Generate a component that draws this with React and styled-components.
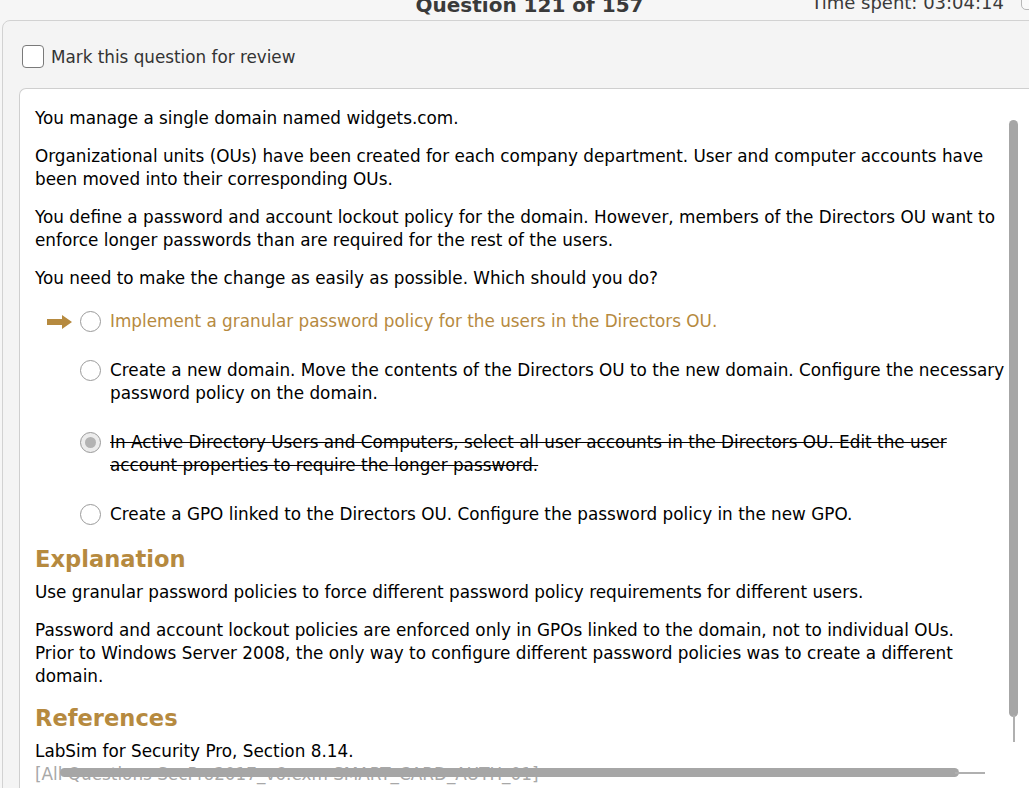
import React from "react";
import styled, { createGlobalStyle } from "styled-components";

const GlobalStyle = createGlobalStyle`
  html, body {
    margin: 0;
    padding: 0;
    height: 788px;
    overflow: hidden;
    background: #f6f6f6;
    font-family: "DejaVu Sans", Verdana, sans-serif;
  }
`;

const GOLD = "#b68a3f";

const options = [
  { text: "Implement a granular password policy for the users in the Directors OU.", correct: true },
  {
    text: "Create a new domain. Move the contents of the Directors OU to the new domain. Configure the necessary password policy on the domain.",
  },
  {
    text: "In Active Directory Users and Computers, select all user accounts in the Directors OU. Edit the user account properties to require the longer password.",
    chosen: true,
  },
  { text: "Create a GPO linked to the Directors OU. Configure the password policy in the new GPO." },
];

const Arrow = () => (
  <svg width="25" height="14" viewBox="0 0 25 14">
    <path d="M0 4 H15 V0 L25 7 L15 14 V10 H0 Z" fill={GOLD} />
  </svg>
);

const App = () => {
  return (
    <Page>
      <GlobalStyle />
      <Header>
        <span />
        <Title>Question 121 of 157</Title>
        <TimeBox>
          <Time>Time spent: 03:04:14</Time>
          <PauseButton />
        </TimeBox>
      </Header>
      <Panel>
        <ReviewRow>
          <CheckBox />
          <ReviewLabel>Mark this question for review</ReviewLabel>
        </ReviewRow>
        <Sheet>
          <Content>
            <Para>You manage a single domain named widgets.com.</Para>
            <Para>
              Organizational units (OUs) have been created for each company department. User and computer accounts have
              been moved into their corresponding OUs.
            </Para>
            <Para>
              You define a password and account lockout policy for the domain. However, members of the Directors OU want
              to enforce longer passwords than are required for the rest of the users.
            </Para>
            <Para>You need to make the change as easily as possible. Which should you do?</Para>
            <Options>
              {options.map((o, i) => (
                <Option key={i}>
                  <ArrowSlot>{o.correct && <Arrow />}</ArrowSlot>
                  <Radio $checked={o.chosen} />
                  <OptionText $correct={o.correct} $struck={o.chosen}>
                    {o.text}
                  </OptionText>
                </Option>
              ))}
            </Options>
            <Section>
              <Heading>Explanation</Heading>
              <Para>Use granular password policies to force different password policy requirements for different users.</Para>
              <Para>
                Password and account lockout policies are enforced only in GPOs linked to the domain, not to individual OUs.
                Prior to Windows Server 2008, the only way to configure different password policies was to create a
                different domain.
              </Para>
              <Heading $top={15}>References</Heading>
              <RefLine>LabSim for Security Pro, Section 8.14.</RefLine>
              <SourceLine>[All Questions SecPro2017_v6.exm SMART_CARD_AUTH_01]</SourceLine>
            </Section>
          </Content>
          <VThumb />
          <VTrack />
          <HThumb />
          <HTrack />
        </Sheet>
      </Panel>
    </Page>
  );
};

const Page = styled.div`
  width: 1029px;
  height: 788px;
  overflow: hidden;
`;

const Header = styled.div`
  display: grid;
  grid-template-columns: 1fr auto 1fr;
  align-items: end;
  height: 20px;
  padding-left: 30px;
`;

const Title = styled.div`
  font-weight: bold;
  font-size: 20px;
  line-height: 20px;
  color: #3a3a3a;
  margin-top: -9px;
  transform: translateY(-5px);
`;

const TimeBox = styled.div`
  display: flex;
  justify-content: flex-end;
  align-items: flex-start;
  align-self: start;
  gap: 17px;
`;

const Time = styled.div`
  font-size: 18px;
  line-height: 18px;
  color: #3a3a3a;
  margin-top: -6px;
`;

const PauseButton = styled.div`
  width: 30px;
  height: 10px;
  margin-top: -2px;
  margin-right: -24px;
  border: 1px solid #b8b8b8;
  border-radius: 0 0 0 5px;
  background: #fafafa;
`;

const Panel = styled.div`
  margin-left: 2px;
  width: 1060px;
  height: 800px;
  border: 1px solid #d2d2d2;
  border-radius: 8px;
  background: #f4f4f4;
  padding: 24px 0 0 16px;
  box-sizing: border-box;
`;

const ReviewRow = styled.div`
  display: flex;
  align-items: center;
  gap: 7px;
  margin-left: 3px;
  height: 23px;
`;

const CheckBox = styled.div`
  width: 20px;
  height: 21px;
  border: 1px solid #7a7a7a;
  border-radius: 4px;
  background: #fff;
`;

const ReviewLabel = styled.span`
  font-size: 16.8px;
  color: #333;
`;

const Sheet = styled.div`
  position: relative;
  margin-top: 20px;
  height: 720px;
  border: 1px solid #cfcfcf;
  border-right: none;
  border-radius: 7px 0 0 0;
  background: #fff;
  padding: 18px 0 0 15px;
  box-sizing: border-box;
  overflow: hidden;
`;

const Content = styled.div`
  width: 976px;
  font-size: 16.83px;
  line-height: 23px;
  color: #000;
`;

const Section = styled.div`
  width: 945px;
`;

const Para = styled.p`
  margin: 0 0 15px 0;
`;

const Options = styled.div`
  display: flex;
  flex-direction: column;
  gap: 26px;
  margin: 20px 0 18px 12px;
`;

const Option = styled.div`
  display: flex;
  align-items: flex-start;
`;

const ArrowSlot = styled.div`
  width: 33px;
  height: 23px;
  display: flex;
  align-items: center;
  flex-shrink: 0;
`;

const Radio = styled.div`
  width: 19px;
  height: 19px;
  margin-top: 1px;
  margin-right: 9px;
  flex-shrink: 0;
  border: 1px solid #9a9a9a;
  border-radius: 50%;
  background: ${(p) => (p.$checked ? "#ececec" : "#fff")};
  display: flex;
  align-items: center;
  justify-content: center;

  &::after {
    content: "";
    display: ${(p) => (p.$checked ? "block" : "none")};
    width: 11px;
    height: 11px;
    border-radius: 50%;
    background: #b3b3b3;
  }
`;

const OptionText = styled.div`
  color: ${(p) => (p.$correct ? GOLD : "#000")};
  text-decoration: ${(p) => (p.$struck ? "line-through" : "none")};
`;

const Heading = styled.h2`
  margin: ${(p) => (p.$top ? p.$top : 0)}px 0 7px 0;
  font-size: 22.6px;
  line-height: 30px;
  font-weight: bold;
  color: ${GOLD};
`;

const RefLine = styled.div`
  margin-top: 2px;
`;

const SourceLine = styled.div`
  color: #a8a8a8;
`;

const VThumb = styled.div`
  position: absolute;
  top: 31px;
  left: 989px;
  width: 9px;
  height: 597px;
  border-radius: 5px;
  background: #a6a6a6;
`;

const VTrack = styled.div`
  position: absolute;
  top: 626px;
  left: 993px;
  width: 2px;
  height: 27px;
  background: #b0b0b0;
`;

const HThumb = styled.div`
  position: absolute;
  top: 679px;
  left: 40px;
  width: 899px;
  height: 9px;
  border-radius: 5px;
  background: #a6a6a6;
`;

const HTrack = styled.div`
  position: absolute;
  top: 683px;
  left: 935px;
  width: 30px;
  height: 2px;
  background: #b0b0b0;
`;

export default App;
